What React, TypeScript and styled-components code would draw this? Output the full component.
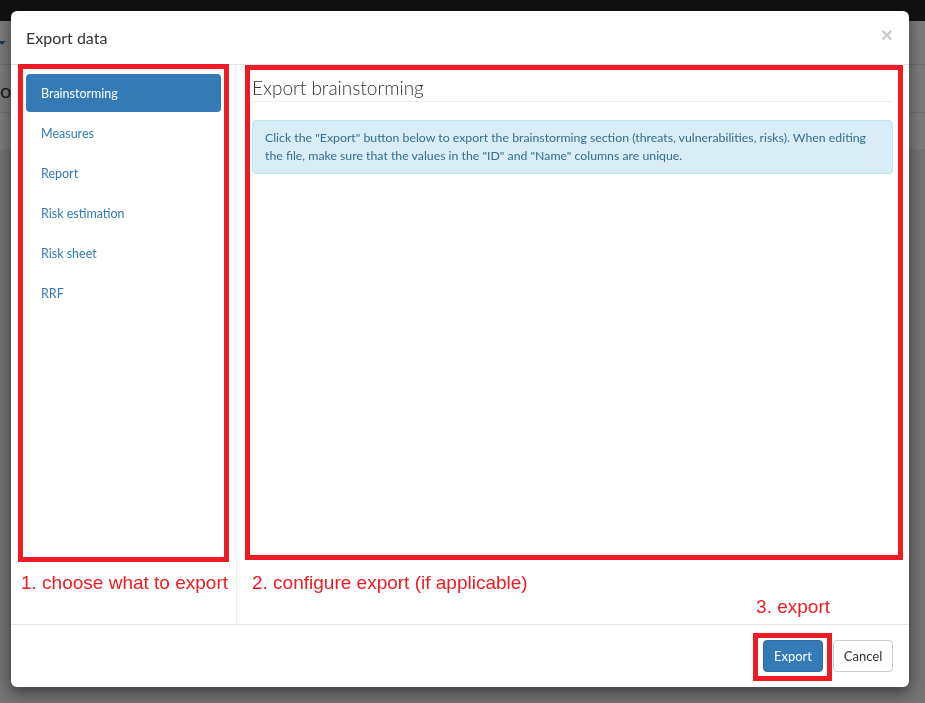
import { FC } from 'react';
import styled, { createGlobalStyle } from 'styled-components';

const Colors = {
    red: '#ed1c24',
    blue: '#337ab7',
    text: '#333',
    line: '#e5e5e5',
};

const GlobalStyle = createGlobalStyle`
    * { box-sizing: border-box; }
    html, body { margin: 0; padding: 0; }
    body {
        width: 925px;
        height: 703px;
        overflow: hidden;
        font-family: Lato, "Liberation Sans", sans-serif;
        color: ${Colors.text};
    }
`;

/* page behind the backdrop */
const Page = styled.div`
    height: 703px;
    display: flex;
    flex-direction: column;
    background: #e6e6e6;
`;

const NavBar = styled.div`
    height: 21px;
    background: #222;
`;

const Toolbar = styled.div`
    height: 44px;
    background: #f6f6f6;
    border-bottom: 1px solid #dcdcdc;
    display: flex;
    align-items: center;
`;

const Caret = styled.span`
    width: 0;
    height: 0;
    margin-top: 1px;
    border-left: 4px solid transparent;
    border-right: 4px solid transparent;
    border-top: 4px solid ${Colors.blue};
    margin-left: -2px;
`;

const TitleRow = styled.div`
    height: 48px;
    background: #f6f6f6;
    border-bottom: 1px solid #dcdcdc;
    display: flex;
    align-items: center;
    font-size: 20px;
    padding-top: 2px;
`;

const SubRow = styled.div`
    height: 36px;
    background: #f6f6f6;
`;

/* modal */
const Backdrop = styled.div`
    position: fixed;
    inset: 0;
    background: rgba(0, 0, 0, 0.5);
    padding: 11px 0 0 11px;
`;

const Modal = styled.div`
    width: 898px;
    height: 676px;
    background: #fff;
    border-radius: 6px;
    box-shadow: 0 5px 15px rgba(0, 0, 0, 0.5);
    display: flex;
    flex-direction: column;
`;

const Header = styled.div`
    display: flex;
    justify-content: space-between;
    align-items: flex-start;
    padding: 15px 16px 15px 15px;
    border-bottom: 1px solid ${Colors.line};
`;

const Title = styled.h4`
    margin: 0;
    font-size: 16px;
    font-weight: 400;
    line-height: 23px;
`;

const Close = styled.button`
    border: 0;
    background: none;
    padding: 0;
    margin-top: -2px;
    font-family: "Liberation Sans", Arial, sans-serif;
    font-size: 21px;
    font-weight: 700;
    line-height: 1;
    color: #000;
    opacity: 0.2;
`;

const Body = styled.div`
    flex: 1;
    display: flex;
`;

const LeftCol = styled.div`
    width: 226px;
    border-right: 1px solid #eee;
    padding-left: 7px;
`;

const RightCol = styled.div`
    flex: 1;
    padding: 0 6px 0 8px;
    display: flex;
    flex-direction: column;
`;

const Frame = styled.div<{ $h: number; $top?: number }>`
    border: 5px solid ${Colors.red};
    height: ${p => p.$h}px;
    margin-top: ${p => p.$top ?? 0}px;
`;

const NavFrame = styled(Frame)`
    width: 211px;
    padding: 5px 3px 0 3px;
`;

const Nav = styled.ul`
    list-style: none;
    margin: 0;
    padding: 0;
    display: flex;
    flex-direction: column;
    gap: 2px;
`;

const NavItem = styled.li<{ $active?: boolean }>`
    height: 38px;
    line-height: 37px;
    padding: 1px 15px 0;
    border-radius: 4px;
    font-size: 12.5px;
    color: ${p => (p.$active ? '#fff' : Colors.blue)};
    background: ${p => (p.$active ? Colors.blue : 'transparent')};
`;

const Note = styled.div<{ $left?: number; $right?: number; $top: number }>`
    font-family: "Liberation Sans", Arial, sans-serif;
    font-size: 19px;
    line-height: 22px;
    color: ${Colors.red};
    margin-top: ${p => p.$top}px;
    padding-left: ${p => p.$left ?? 0}px;
    padding-right: ${p => p.$right ?? 0}px;
    text-align: ${p => (p.$right ? 'right' : 'left')};
    white-space: nowrap;
`;

const PanelFrame = styled(Frame)`
    padding: 0 5px 0 2px;
`;

const PanelTitle = styled.h3`
    margin: 7px 0 0;
    padding-bottom: 2px;
    border-bottom: 1px solid #eee;
    font-size: 19px;
    font-weight: 300;
    line-height: 22px;
`;

const Alert = styled.div`
    margin-top: 18px;
    padding: 8px 12px;
    border: 1px solid #bce8f1;
    border-radius: 4px;
    background: #d9edf7;
    color: #31708f;
    font-size: 12.3px;
    line-height: 18px;
`;

const Footer = styled.div`
    border-top: 1px solid ${Colors.line};
    padding: 15px 16px 15px 15px;
    display: flex;
    justify-content: flex-end;
    align-items: flex-start;
`;

const ButtonFrame = styled.div`
    border: 5px solid ${Colors.red};
    padding: 2px 4px 4px 5px;
    margin: -7px 1px -9px 0;
`;

const Button = styled.button<{ $primary?: boolean }>`
    height: 32px;
    width: 60px;
    padding: 0;
    border-radius: 4px;
    font-family: Lato, "Liberation Sans", sans-serif;
    font-size: 13px;
    border: 1px solid ${p => (p.$primary ? '#2e6da4' : '#ccc')};
    background: ${p => (p.$primary ? Colors.blue : '#fff')};
    color: ${p => (p.$primary ? '#fff' : Colors.text)};
`;

const sections = ['Brainstorming', 'Measures', 'Report', 'Risk estimation', 'Risk sheet', 'RRF'];

const App: FC = () => {
    return (
        <>
            <GlobalStyle />
            <Page>
                <NavBar />
                <Toolbar>
                    <Caret />
                </Toolbar>
                <TitleRow>o.</TitleRow>
                <SubRow />
            </Page>

            <Backdrop>
                <Modal>
                    <Header>
                        <Title>Export data</Title>
                        <Close>×</Close>
                    </Header>

                    <Body>
                        <LeftCol>
                            <NavFrame $h={498} $top={-1}>
                                <Nav>
                                    {sections.map((s, i) => (
                                        <NavItem key={s} $active={i === 0}>{s}</NavItem>
                                    ))}
                                </Nav>
                            </NavFrame>
                            <Note $left={3} $top={10}>1. choose what to export</Note>
                        </LeftCol>

                        <RightCol>
                            <PanelFrame $h={495}>
                                <PanelTitle>Export brainstorming</PanelTitle>
                                <Alert>
                                    Click the "Export" button below to export the brainstorming section (threats, vulnerabilities, risks). When editing the file, make sure that the values in the "ID" and "Name" columns are unique.
                                </Alert>
                            </PanelFrame>
                            <Note $left={7} $top={12}>2. configure export (if applicable)</Note>
                            <Note $right={73} $top={2}>3. export</Note>
                        </RightCol>
                    </Body>

                    <Footer>
                        <ButtonFrame>
                            <Button $primary>Export</Button>
                        </ButtonFrame>
                        <Button>Cancel</Button>
                    </Footer>
                </Modal>
            </Backdrop>
        </>
    );
};

export default App;
